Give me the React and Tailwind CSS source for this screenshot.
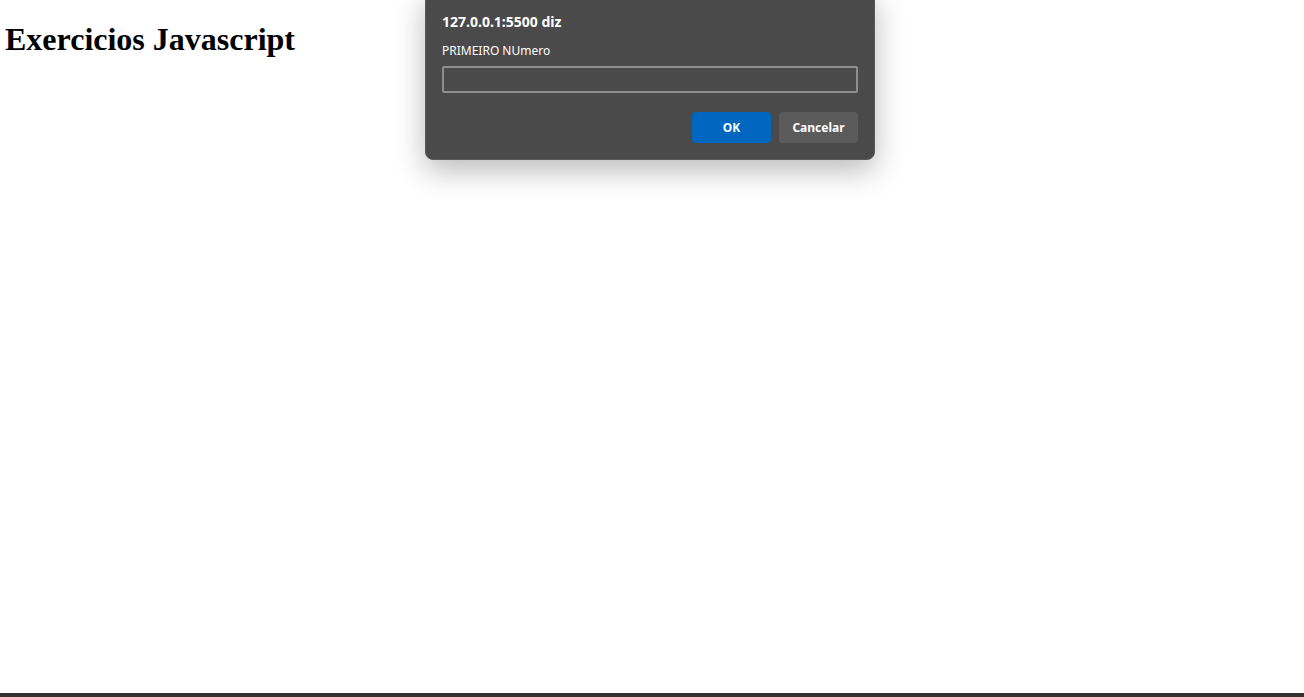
import React from "react";

export default function App() {
  return (
    <div className="relative w-[1304px] h-[697px] bg-white overflow-hidden">
      <div className="h-[693px] pl-[5px] pt-[21px]">
        <h1
          className="text-[32px] font-bold text-black leading-[37px]"
          style={{ fontFamily: '"Liberation Serif", "Times New Roman", serif' }}
        >
          Exercicios Javascript
        </h1>
      </div>
      <div className="h-[4px] bg-[#333333]" />

      <div
        className="absolute left-[425px] top-[-10px] w-[450px] h-[170px] rounded-[8px] bg-[#4a4a4a] border border-[#5a5a5a] shadow-[0_10px_30px_rgba(0,0,0,0.28)] pl-[16px] pr-[16px] pt-[22px]"
        style={{ fontFamily: '"Noto Sans", "Open Sans", sans-serif' }}
      >
        <div className="text-[14px] font-bold text-white leading-[18px]">127.0.0.1:5500 diz</div>
        <div className="mt-[11px] text-[12px] text-white leading-[18px]">PRIMEIRO NUmero</div>
        <div className="mt-[6px] h-[27px] rounded-[2px] border-2 border-[#8f8f8f] bg-[#4a4a4a]" />
        <div className="mt-[19px] flex justify-end gap-[8px]">
          <div className="w-[79px] h-[31px] rounded-[4px] bg-[#0067c0] flex items-center justify-center text-[12px] font-bold text-white">
            OK
          </div>
          <div className="w-[79px] h-[31px] rounded-[4px] bg-[#5b5b5b] flex items-center justify-center text-[12px] font-bold text-white">
            Cancelar
          </div>
        </div>
      </div>
    </div>
  );
}
